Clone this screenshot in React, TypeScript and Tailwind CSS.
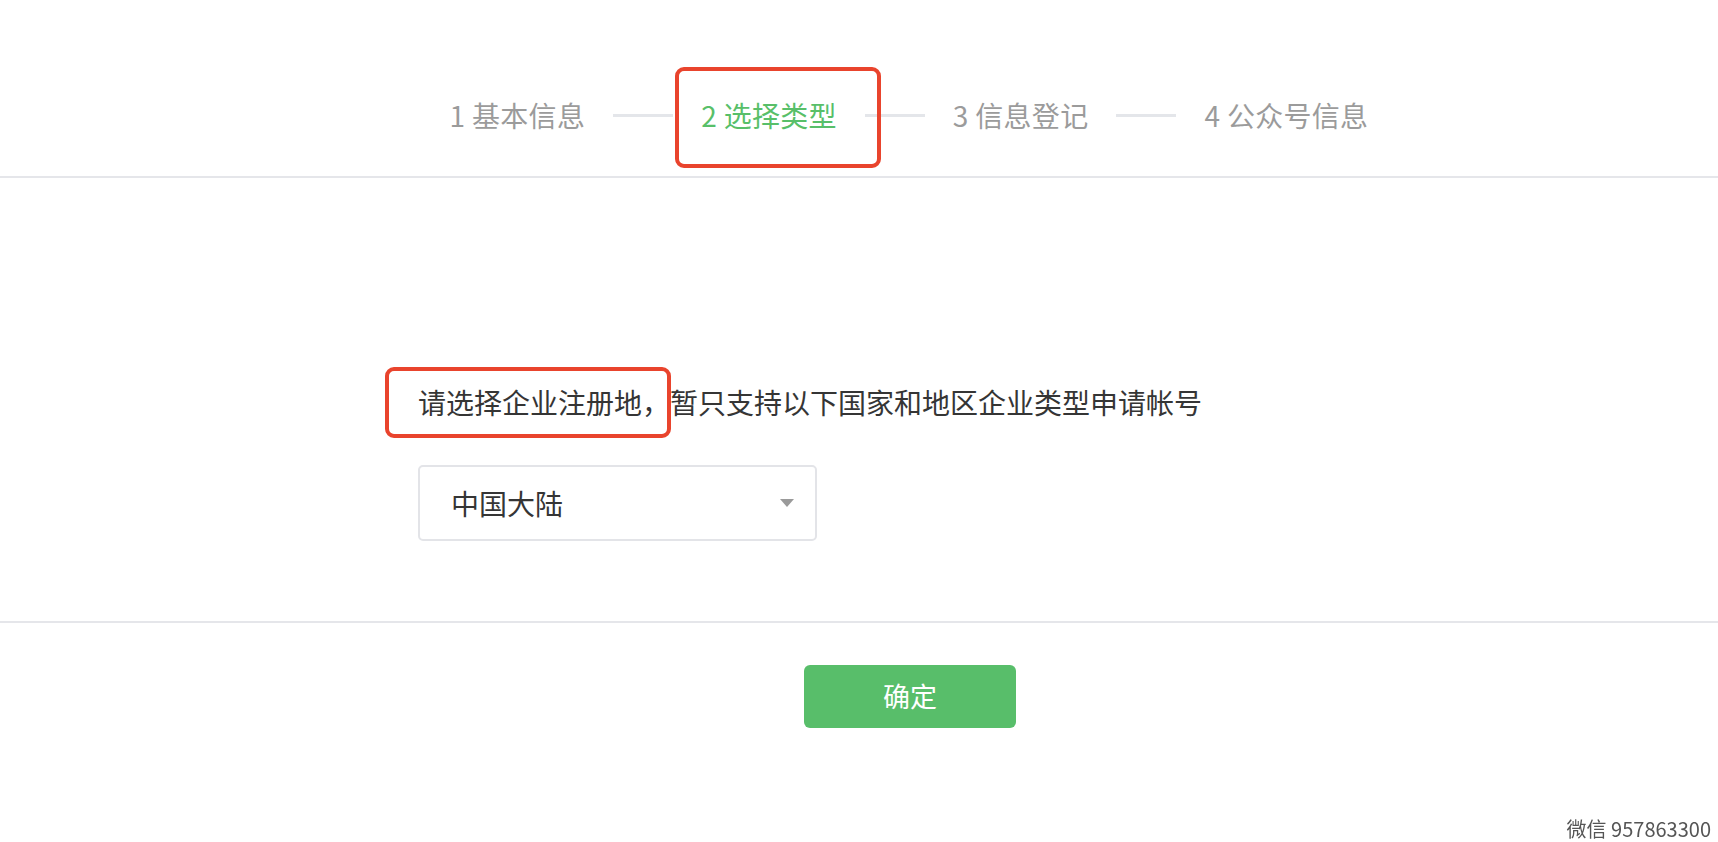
import React from 'react';

const steps = [
  { no: 1, label: '基本信息' },
  { no: 2, label: '选择类型', active: true },
  { no: 3, label: '信息登记' },
  { no: 4, label: '公众号信息' },
];

const font = { fontFamily: '"Noto Sans CJK SC", "Noto Sans", sans-serif' };

const Steps: React.FC = () => {
  return (
    <div className="flex items-center h-[40px]">
      {steps.map((s, i) => (
        <React.Fragment key={s.no}>
          {i > 0 && <div className="mx-[28px] w-[60px] h-[3px] bg-[#e4e6ea]" />}
          <div
            className={
              'relative text-[28px] leading-[40px] tracking-[0.3px] whitespace-nowrap ' +
              (s.active ? 'text-[#58bf69]' : 'text-[#9b9b9b]')
            }
          >
            {s.no} {s.label}
            {s.active && (
              <div className="absolute left-[-26px] top-[-28px] w-[206px] h-[101px] border-[4px] border-[#e9442d] rounded-[9px]" />
            )}
          </div>
        </React.Fragment>
      ))}
    </div>
  );
};

const App: React.FC = () => {
  return (
    <div className="min-h-[842px] bg-white text-[#333]" style={font}>
      <header className="border-b-2 border-[#e5e6ea] pt-[95px] pb-[41px] pl-[100px] flex justify-center">
        <Steps />
      </header>

      <section className="border-b-2 border-[#e5e6ea] pl-[98px] flex justify-center pt-[204px] pb-[80px]">
        <div className="w-[980px]">
          <div className="relative inline-block text-[28px] leading-[40px] text-[#353535] whitespace-nowrap">
            请选择企业注册地，暂只支持以下国家和地区企业类型申请帐号
            <div className="absolute left-[-33px] top-[-15px] w-[286px] h-[71px] border-[4px] border-[#e9442d] rounded-[9px]" />
          </div>
          <div className="mt-[43px] w-[399px] h-[76px] border-2 border-[#e3e4e8] rounded-[5px] flex items-center justify-between pl-[31px] pr-[21px]">
            <span className="text-[28px] text-[#353535]">中国大陆</span>
            <span className="w-0 h-0 border-l-[7px] border-r-[7px] border-t-[8px] border-l-transparent border-r-transparent border-t-[#9a9a9a]" />
          </div>
        </div>
      </section>

      <div className="pl-[102px] flex justify-center pt-[42px]">
        <button className="w-[212px] h-[63px] rounded-[6px] bg-[#58be6a] text-white text-[27px]">
          确定
        </button>
      </div>

      <div className="fixed right-[7px] bottom-0 text-[20px] leading-[26px] text-[#555]">
        微信 957863300
      </div>
    </div>
  );
};

export default App;
